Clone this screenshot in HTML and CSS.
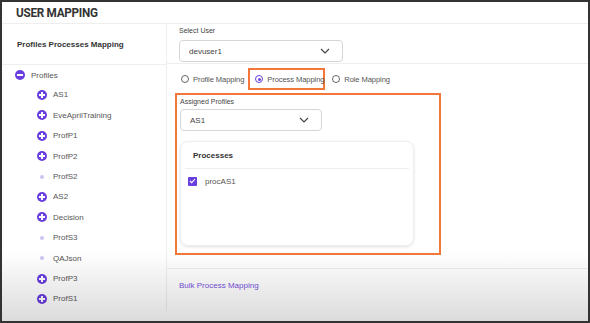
FILE: index.html
```html
<!DOCTYPE html>
<html lang="en">
<head>
    <meta charset="UTF-8">
    <title>User Mapping</title>
    <link rel="stylesheet" href="styles.css">
</head>
<body>
    <div class="frame">
        <header class="page-header">
            <h1>USER MAPPING</h1>
        </header>

        <div class="mapping">
            <aside class="side">
                <div class="side-head">Profiles Processes Mapping</div>
                <ul class="tree">
                    <li class="tree-root"><span class="node minus"></span>Profiles</li>
                    <li><span class="node plus"></span>AS1</li>
                    <li><span class="node plus"></span>EveAprilTraining</li>
                    <li><span class="node plus"></span>ProfP1</li>
                    <li><span class="node plus"></span>ProfP2</li>
                    <li><span class="node leaf"></span>ProfS2</li>
                    <li><span class="node plus"></span>AS2</li>
                    <li><span class="node plus"></span>Decision</li>
                    <li><span class="node leaf"></span>ProfS3</li>
                    <li><span class="node leaf"></span>QAJson</li>
                    <li><span class="node plus"></span>ProfP3</li>
                    <li><span class="node plus"></span>ProfS1</li>
                </ul>
            </aside>

            <main class="main">
                <section class="user-select">
                    <label class="field-label">Select User</label>
                    <div class="dropdown user-dropdown">
                        <span>devuser1</span>
                        <svg width="10" height="6" viewBox="0 0 10 6"><path d="M1 1l4 4 4-4" fill="none" stroke="#444" stroke-width="1.2"/></svg>
                    </div>
                </section>

                <section class="mode">
                    <div class="radios">
                        <label class="radio"><span class="dot"></span>Profile Mapping</label>
                        <label class="radio checked highlight"><span class="dot"></span>Process Mapping</label>
                        <label class="radio"><span class="dot"></span>Role Mapping</label>
                    </div>

                    <div class="assigned highlight">
                        <label class="field-label">Assigned Profiles</label>
                        <div class="dropdown profile-dropdown">
                            <span>AS1</span>
                            <svg width="10" height="6" viewBox="0 0 10 6"><path d="M1 1l4 4 4-4" fill="none" stroke="#444" stroke-width="1.2"/></svg>
                        </div>
                        <div class="card">
                            <div class="card-title">Processes</div>
                            <label class="check">
                                <span class="box"><svg width="7" height="6" viewBox="0 0 7 6"><path d="M1 3l1.7 1.7L6 1" fill="none" stroke="#fff" stroke-width="1.1"/></svg></span>
                                procAS1
                            </label>
                        </div>
                    </div>
                </section>

                <section class="bulk">
                    <a href="#">Bulk Process Mapping</a>
                </section>
            </main>
        </div>
    </div>
</body>
</html>
```

FILE: styles.css
```css
body {
    margin: 0;
    font-family: 'Liberation Sans', Arial, sans-serif;
    color: #444;
    background: #fff;
}

.frame {
    position: relative;
    width: 590px;
    height: 323px;
    box-sizing: border-box;
    border: 2px solid #333;
    overflow: hidden;
}

/* video-ish shading at the bottom of the capture */
.frame::after {
    content: "";
    position: absolute;
    left: 0;
    right: 0;
    bottom: 0;
    height: 70px;
    background: linear-gradient(rgba(0, 0, 0, 0), rgba(0, 0, 0, 0.14));
    pointer-events: none;
}

.page-header {
    height: 21px;
    border-bottom: 1px solid #eee;
    display: flex;
    align-items: center;
    padding-left: 14px;
}

.page-header h1 {
    margin: 0;
    font-family: 'Roboto', sans-serif;
    font-size: 13px;
    font-weight: 700;
    color: #333;
    letter-spacing: -0.3px;
    transform: scaleX(0.9);
    transform-origin: left center;
}

.mapping {
    display: grid;
    grid-template-columns: 165px 1fr;
    height: 287px;
}

.side {
    border-right: 1px solid #eee;
}

.side-head {
    height: 40px;
    border-bottom: 1px solid #eee;
    display: flex;
    align-items: center;
    padding-left: 15px;
    font-size: 8px;
    font-weight: 700;
    color: #333;
}

.tree {
    list-style: none;
    margin: 0;
    padding: 0 0 0 13px;
}

.tree li {
    height: 20.4px;
    display: flex;
    align-items: center;
    font-size: 8px;
    color: #555;
    padding-left: 22px;
}

.tree li.tree-root {
    padding-left: 0;
    margin-bottom: -0.6px;
}

.node {
    position: relative;
    width: 10px;
    height: 10px;
    border-radius: 50%;
    margin-right: 6px;
    flex-shrink: 0;
}

.minus,
.plus {
    background: #6a3fe0;
}

.minus::before,
.plus::before,
.plus::after {
    content: "";
    position: absolute;
    left: 2px;
    top: 4px;
    width: 6px;
    height: 2px;
    background: #fff;
}

.plus::after {
    left: 4px;
    top: 2px;
    width: 2px;
    height: 6px;
}

.leaf {
    width: 4px;
    height: 4px;
    margin: 0 9px 0 3px;
    background: #cdc3f2;
}

.main {
    display: flex;
    flex-direction: column;
}

.user-select {
    height: 40px;
    border-bottom: 1px solid #eee;
    padding: 3px 0 0 12px;
    box-sizing: border-box;
}

.field-label {
    display: block;
    font-size: 7px;
    color: #444;
    height: 8px;
    line-height: 8px;
}

.dropdown {
    display: flex;
    align-items: center;
    justify-content: space-between;
    box-sizing: border-box;
    height: 22px;
    border: 1px solid #d6d6d6;
    border-radius: 4px;
    padding: 0 12px 0 9px;
    font-size: 8px;
    color: #444;
}

.user-dropdown {
    width: 164px;
    margin-top: 5px;
}

.mode {
    height: 205px;
    border-bottom: 1px solid #eee;
    padding: 4px 0 0 8px;
    box-sizing: border-box;
}

.radios {
    display: flex;
    align-items: center;
    height: 22px;
}

.radio {
    display: flex;
    align-items: center;
    white-space: nowrap;
    font-size: 7.6px;
    letter-spacing: -0.1px;
    color: #555;
    height: 22px;
    padding: 0 0 0 6px;
    box-sizing: border-box;
}

.dot {
    width: 8px;
    height: 8px;
    border: 1px solid #666;
    border-radius: 50%;
    box-sizing: border-box;
    margin-right: 4px;
    position: relative;
    flex-shrink: 0;
}

.checked .dot {
    border-color: #6a3fe0;
}

.checked .dot::after {
    content: "";
    position: absolute;
    left: 1.5px;
    top: 1.5px;
    width: 3px;
    height: 3px;
    border-radius: 50%;
    background: #6a3fe0;
}

.highlight {
    border: 2px solid #f3773b;
}

.radio.highlight {
    width: 77px;
    margin: 0 1px 0 4px;
    padding: 0 0 0 5px;
}

.assigned {
    width: 266px;
    height: 162px;
    margin-top: 3px;
    box-sizing: border-box;
    padding: 3px 0 0 3px;
}

.profile-dropdown {
    width: 142px;
    margin-top: 3px;
}

.card {
    width: 234px;
    height: 105px;
    margin-top: 10px;
    box-sizing: border-box;
    border: 1px solid #eee;
    border-radius: 8px;
    box-shadow: 0 1px 3px rgba(0, 0, 0, 0.12);
    padding: 0 4px;
}

.card-title {
    height: 26px;
    border-bottom: 1px solid #eee;
    display: flex;
    align-items: center;
    padding-left: 8px;
    font-size: 8px;
    font-weight: 700;
    color: #333;
}

.check {
    display: flex;
    align-items: center;
    height: 24px;
    font-size: 8px;
    color: #555;
    padding-left: 3px;
}

.box {
    width: 9px;
    height: 9px;
    background: #6a3fe0;
    border-radius: 1px;
    margin-right: 8px;
    display: flex;
    align-items: center;
    justify-content: center;
}

.bulk {
    padding: 5px 0 0 12px;
}

.bulk a {
    font-size: 8px;
    color: #7752e0;
    text-decoration: none;
}
```
